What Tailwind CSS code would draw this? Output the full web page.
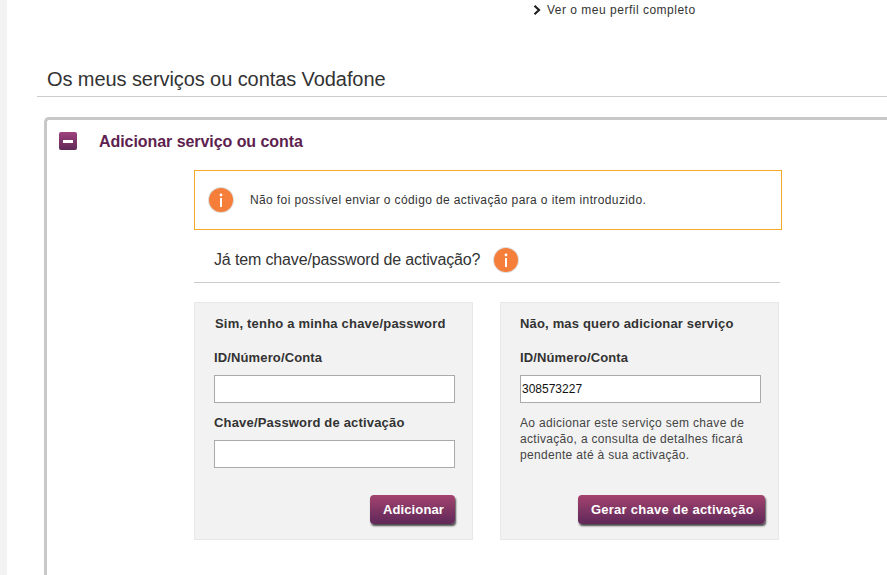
<!DOCTYPE html>
<html lang="pt">
<head>
    <meta charset="UTF-8">
    <meta name="viewport" content="width=device-width, initial-scale=1.0">
    <script src="https://cdn.jsdelivr.net/npm/@tailwindcss/browser@4"></script>
    <title>Os meus serviços</title>
</head>
<body class="bg-white h-[575px] w-[887px] overflow-hidden font-['Liberation_Sans',Arial,sans-serif] text-[#333333]">
    <div class="flex h-full">
        <div class="w-[7px] shrink-0 bg-[#f3f3f3]"></div>
        <main class="grow min-w-0 pl-[30px]">
            <!-- perfil -->
            <div class="h-[69px] pl-[496px] pt-[2px] flex items-start">
                <a class="flex items-center h-[15px] text-[12px] tracking-[0.5px] text-[#333333]">
                    <svg class="w-[8px] h-[10px] mr-[6px]" viewBox="0 0 8 10"><path d="M1.5 0.8 L6 5 L1.5 9.2" fill="none" stroke="#222222" stroke-width="2.2"/></svg>
                    Ver o meu perfil completo
                </a>
            </div>
            <h2 class="h-[28px] pl-[10px] border-b border-[#cccccc] text-[20px] leading-[21px] tracking-[-0.08px] text-[#333333]">Os meus serviços ou contas Vodafone</h2>

            <!-- painel -->
            <section class="ml-[7px] mt-[20px] h-[480px] border-t-[3px] border-l-[3px] border-[#c8c8c8] rounded-tl-[5px]">
                <div class="flex items-center h-[36px] mt-[3px] pl-[12px]">
                    <div class="w-[18px] h-[18px] rounded-[2px] bg-gradient-to-b from-[#a0437f] to-[#5f2a55] flex items-center justify-center">
                        <span class="block w-[10px] h-[3px] bg-white"></span>
                    </div>
                    <h3 class="ml-[22px] pt-[2px] text-[16px] font-bold tracking-[-0.06px] text-[#5e1f4f]">Adicionar serviço ou conta</h3>
                </div>

                <div class="ml-[147px] w-[588px] mt-[11px]">
                    <div class="h-[60px] border border-[#f5a82e] flex items-center pl-[14px]">
                        <span class="w-[24px] h-[24px] rounded-full bg-[#f57e3a] ring-1 ring-[#dddddd] flex items-center justify-center">
                            <svg class="w-[4px] h-[14px]" viewBox="0 0 4 14"><circle cx="2" cy="2" r="1.4" fill="#fff"/><rect x="1" y="5" width="2" height="9" fill="#fff"/></svg>
                        </span>
                        <p class="ml-[17px] text-[12px] tracking-[0.38px] text-[#333333]">Não foi possível enviar o código de activação para o item introduzido.</p>
                    </div>

                    <div class="w-[586px] h-[53px] pt-[7px] border-b border-[#cccccc] flex items-center pl-[20px]">
                        <span class="text-[16px] tracking-[-0.14px] text-[#333333]">Já tem chave/password de activação?</span>
                        <span class="ml-[14px] w-[24px] h-[24px] rounded-full bg-[#f57e3a] ring-1 ring-[#dddddd] flex items-center justify-center">
                            <svg class="w-[4px] h-[14px]" viewBox="0 0 4 14"><circle cx="2" cy="2" r="1.4" fill="#fff"/><rect x="1" y="5" width="2" height="9" fill="#fff"/></svg>
                        </span>
                    </div>

                    <div class="flex mt-[19px] gap-[27px]">
                        <form class="w-[279px] h-[238px] bg-[#f2f2f2] border border-[#e8e8e8] pl-[19px] pr-[17px] pt-[13px] pb-[15px] flex flex-col">
                            <h4 class="text-[13px] leading-[15px] font-bold tracking-[0.2px] pl-[1px] text-[#333333]">Sim, tenho a minha chave/password</h4>
                            <label class="mt-[19px] text-[13px] leading-[15px] font-bold tracking-[0.13px] text-[#333333]">ID/Número/Conta</label>
                            <input type="text" class="mt-[10px] w-[241px] h-[28px] bg-white border border-[#aaaaaa]">
                            <label class="mt-[12px] text-[13px] leading-[15px] font-bold tracking-[0.18px] text-[#333333]">Chave/Password de activação</label>
                            <input type="text" class="mt-[10px] w-[241px] h-[28px] bg-white border border-[#aaaaaa]">
                            <div class="flex justify-end mt-auto">
                                <button type="button" class="h-[29px] pl-[13px] pr-[11px] rounded-[4px] bg-gradient-to-b from-[#a5436f] to-[#5f2858] text-white text-[13px] font-bold tracking-[0.13px] shadow-[1px_2px_2px_rgba(0,0,0,0.7)]">Adicionar</button>
                            </div>
                        </form>

                        <form class="w-[279px] h-[238px] bg-[#f2f2f2] border border-[#e8e8e8] pl-[19px] pr-[13px] pt-[13px] pb-[15px] flex flex-col">
                            <h4 class="text-[13px] leading-[15px] font-bold tracking-[0.17px] text-[#333333]">Não, mas quero adicionar serviço</h4>
                            <label class="mt-[19px] text-[13px] leading-[15px] font-bold tracking-[0.13px] text-[#333333]">ID/Número/Conta</label>
                            <input type="text" value="308573227" class="mt-[10px] w-[241px] h-[28px] bg-white border border-[#aaaaaa] pl-[1px] text-[12px] text-[#111111] font-['Liberation_Sans',Arial,sans-serif]">
                            <p class="mt-[12px] w-[241px] text-[12px] leading-[16px] tracking-[0.32px] text-[#444444]">Ao adicionar este serviço sem chave de activação, a consulta de detalhes ficará pendente até à sua activação.</p>
                            <div class="flex justify-end mt-auto">
                                <button type="button" class="h-[29px] pl-[13px] pr-[11px] rounded-[4px] bg-gradient-to-b from-[#a5436f] to-[#5f2858] text-white text-[13px] font-bold tracking-[0.26px] shadow-[1px_2px_2px_rgba(0,0,0,0.7)]">Gerar chave de activação</button>
                            </div>
                        </form>
                    </div>
                </div>
            </section>
        </main>
    </div>
</body>
</html>
